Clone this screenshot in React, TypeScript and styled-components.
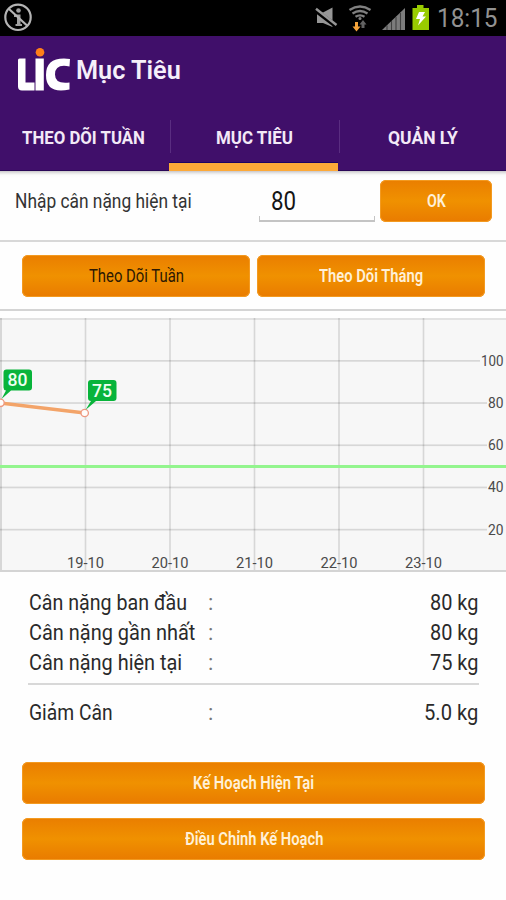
import React, { useLayoutEffect, useRef } from "react";
import styled, { createGlobalStyle } from "styled-components";

const GlobalStyle = createGlobalStyle`
  * { box-sizing: border-box; }
  body { margin: 0; background: #fefefe; font-family: Roboto, "Liberation Sans", sans-serif; }
  button { font-family: inherit; border: 0; padding: 0; cursor: pointer; }
`;

const FitBox = styled.span<{ $w: number }>`
  display: inline-block;
  width: ${(p) => p.$w}px;
  white-space: nowrap;
  text-align: left;
`;
const FitInner = styled.span`
  display: inline-block;
  transform-origin: 0 50%;
`;
function Fit({ w, children }: { w: number; children: React.ReactNode }) {
  const ref = useRef<HTMLSpanElement>(null);
  useLayoutEffect(() => {
    const el = ref.current;
    if (el) el.style.transform = `scaleX(${w / el.offsetWidth})`;
  }, [w]);
  return (
    <FitBox $w={w}>
      <FitInner ref={ref}>{children}</FitInner>
    </FitBox>
  );
}

const Screen = styled.div`
  width: 506px;
  height: 900px;
  overflow: hidden;
  display: flex;
  flex-direction: column;
`;

const StatusBar = styled.div`
  height: 36px;
  flex: none;
  background: #000;
  display: flex;
  justify-content: space-between;
`;
const StatusIcon = styled.svg`
  display: block;
  flex: none;
`;
const StatusRight = styled.div`
  display: flex;
  padding-right: 8px;
`;
const Clock = styled.div`
  color: #929292;
  font-size: 25.5px;
  line-height: 36px;
`;

const Header = styled.header`
  height: 135px;
  flex: none;
  background: #400f6a;
  border-bottom: 1px solid #2a0757;
`;
const TitleRow = styled.div`
  height: 68px;
  display: flex;
  align-items: center;
`;
const Title = styled.h1`
  margin: 1px 0 0 1px;
  font-size: 25px;
  line-height: 30px;
  font-weight: 600;
  color: #f6effa;
`;
const Tabs = styled.nav`
  height: 67px;
  display: grid;
  grid-template-columns: 169px 169px 168px;
`;
const Tab = styled.div<{ $active?: boolean; $shift: number }>`
  display: flex;
  align-items: center;
  justify-content: center;
  color: #f3e9f7;
  font-size: 18px;
  font-weight: 700;
  padding-top: ${(p) => (p.$active ? 8 : 0)}px;
  border-bottom: ${(p) => (p.$active ? "8px solid #fda938" : "0")};
  box-shadow: ${(p) => (p.$active ? "inset 0 -1px 0 #1d0463" : "none")};

  & > span {
    margin-left: ${(p) => p.$shift}px;
  }
  & + & {
    background: linear-gradient(#5a2d81, #5a2d81) 1px 16px / 1px 33px no-repeat;
  }
`;

const EntryRow = styled.section`
  height: 71px;
  flex: none;
  display: flex;
  align-items: flex-start;
  padding: 9px 14px 0 15px;
  border-bottom: 2px solid #d8d8d8;
  background: linear-gradient(#c9c6c9 0, #e6e6e6 2px, #fafafa 4px, #fefefe 7px);
`;
const EntryLabel = styled.label`
  width: 244px;
  font-size: 20px;
  line-height: 43px;
  color: #333;
`;
const Field = styled.div`
  width: 116px;
  height: 42px;
  margin-right: 5px;
  padding-left: 12px;
  font-size: 25px;
  line-height: 43px;
  color: #151515;
  background:
    linear-gradient(#c4c4c4, #c4c4c4) 0 100% / 100% 2px no-repeat,
    linear-gradient(#c4c4c4, #c4c4c4) 0 100% / 1px 6px no-repeat,
    linear-gradient(#c4c4c4, #c4c4c4) 100% 100% / 1px 6px no-repeat;
`;
const ActionButton = styled.button<{ $w: number; $dark?: boolean }>`
  width: ${(p) => p.$w}px;
  height: 42px;
  flex: none;
  border-radius: 6px;
  background: linear-gradient(#ea7e00, #f09100 50%, #e97b00);
  box-shadow: inset 0 0 0 1px #f39a20;
  color: ${(p) => (p.$dark ? "#2c1803" : "#fff0d8")};
  font-size: 18px;
  font-weight: ${(p) => (p.$dark ? 400 : 600)};
  line-height: 42px;
`;

const RangeRow = styled.section`
  height: 69px;
  flex: none;
  display: flex;
  gap: 7px;
  padding: 13px 0 0 22px;
  border-bottom: 2px solid #d4d4d4;
`;
const Chart = styled.svg`
  display: block;
  flex: none;
  margin-top: 7px;
`;

const Details = styled.section`
  padding: 15px 28px 0 29px;
  height: 190px;
  flex: none;
`;
const DetailRow = styled.div`
  height: 30.2px;
  display: grid;
  grid-template-columns: 179px 1fr auto;
  font-size: 22px;
  line-height: 31px;
  color: #2a2a2a;
`;
const Colon = styled.span`
  color: #777;
`;
const Rule = styled.div`
  height: 2px;
  margin: 5px -1px 12px;
  background: #d8d8d8;
`;
const Actions = styled.footer`
  display: flex;
  flex-direction: column;
  gap: 14px;
  padding-left: 22px;
`;

const readings = [
  { label: "Cân nặng ban đầu", w: 158, value: "80 kg", vw: 48 },
  { label: "Cân nặng gần nhất", w: 166, value: "80 kg", vw: 48 },
  { label: "Cân nặng hiện tại", w: 153, value: "75 kg", vw: 48 },
];

function Reading({ label, w, value, vw }: (typeof readings)[number]) {
  return (
    <DetailRow>
      <Fit w={w}>{label}</Fit>
      <Colon>:</Colon>
      <Fit w={vw}>{value}</Fit>
    </DetailRow>
  );
}

function WeightChart() {
  const days = ["19-10", "20-10", "21-10", "22-10", "23-10"];
  const levels = [100, 80, 60, 40, 20];
  return (
    <Chart width="506" height="254" viewBox="0 0 506 254" fontFamily="Roboto, sans-serif">
      <rect width="506" height="254" fill="#f7f7f7" />
      <rect width="506" height="2" fill="#e2e2e2" />
      <rect y="252" width="506" height="2" fill="#d4d4d4" />
      <g fill="#000" fillOpacity="0.13">
        <rect x="0" width="2" height="252" />
        {days.map((d, i) => (
          <rect key={d} x={84.7 + i * 84.5} width="1.6" height="252" />
        ))}
        {levels.map((v, i) => (
          <rect key={v} y={42 + i * 42.2} width={v === 100 ? 480 : 487} height="1.7" />
        ))}
      </g>
      <rect y="147" width="506" height="3" fill="#93f58e" />
      <g fontSize="14.2" fill="#4a4a4a">
        {levels.map((v, i) => (
          <text key={v} x="503.5" y={47.8 + i * 42.2} textAnchor="end" textLength={v === 100 ? 22.5 : 15.5} lengthAdjust="spacingAndGlyphs">
            {v}
          </text>
        ))}
        {days.map((d, i) => (
          <text key={d} x={85.5 + i * 84.5} y="250" textAnchor="middle" textLength="37" lengthAdjust="spacingAndGlyphs">
            {d}
          </text>
        ))}
      </g>
      <path d="M0 85 L85 95" stroke="#f3a469" strokeWidth="3.4" fill="none" />
      <g fill="#fffdfb" stroke="#ee9880" strokeWidth="1.3">
        <circle cx="0.5" cy="84.8" r="3.7" />
        <circle cx="84.7" cy="95" r="3.7" />
      </g>
      <g fill="#08b43b">
        <path d="M1.5 81 L6 72.5 Q3.5 72 3.5 69.5 V54.5 q0-3 3-3 H29 q3 0 3 3 V69.5 q0 3-3 3 H11z" />
        <path d="M85.5 92 L91 83 Q88 83 88 80 V65 q0-3 3-3 H113.5 q3 0 3 3 V80 q0 3-3 3 H96z" />
      </g>
      <g fontSize="17.5" fontWeight="500" fill="#effff2">
        <text x="7.5" y="68" textLength="20" lengthAdjust="spacingAndGlyphs">80</text>
        <text x="92" y="78.500" textLength="20" lengthAdjust="spacingAndGlyphs">75</text>
      </g>
    </Chart>
  );
}

export default function App() {
  return (
    <Screen>
      <GlobalStyle />
      <StatusBar>
        <StatusIcon width="36" height="36" viewBox="0 0 36 36">
          <circle cx="18" cy="17.3" r="12.7" fill="none" stroke="#b4b4b4" strokeWidth="2.2" />
          <circle cx="18.5" cy="10.5" r="2.3" fill="#a0a0a0" />
          <path d="M14 14.5 H20.5 V24 H22 V26 H15.5 V24 H17 V17 H14z" fill="#a0a0a0" />
          <path d="M9 9 L27 25.5" stroke="#b4b4b4" strokeWidth="2.2" />
        </StatusIcon>
        <StatusRight>
          <StatusIcon width="125" height="36" viewBox="312 0 125 36">
            <path d="M317 12.5 H323 L332.5 7.5 V27 L323 23 H317z" fill="#969696" />
            <path d="M314.5 9.5 L336 26" stroke="#000" strokeWidth="4.6" />
            <path d="M316 8.8 L336.5 25" stroke="#969696" strokeWidth="2.4" />
            <g fill="none" stroke="#808080" strokeWidth="2.3">
              <path d="M349.5 10 Q360 3 370.5 10" />
              <path d="M352.5 13.5 Q360 8.5 367.5 13.5" />
              <path d="M355.5 16.8 Q360 14 364.5 16.8" />
            </g>
            <circle cx="360" cy="18.5" r="1.5" fill="#808080" />
            <path d="M355 22 H358 V26.5 H360.5 L356.5 31.5 L352.5 26.5 H355z" fill="#f5a33a" />
            <path d="M361.5 28 V24.5 H359.5 L363 20 L366.5 24.5 H364.5 V28z" fill="#626262" />
            <path d="M382 30 L405 8 V30z" fill="#7c7c7c" />
            <path d="M387 25.5V30 M391.5 21V30 M396 17V30 M400.5 13V30" stroke="#404040" strokeWidth="1.1" />
            <path d="M412.5 8 H417 V5 H423.5 V8 H429 V30 H412.5z" fill="#99cc00" />
            <path d="M419 12 H425 L422.5 16.5 H426 L418 25.5 L420 19 H416z" fill="#fff" />
          </StatusIcon>
          <Clock><Fit w={61}>18:15</Fit></Clock>
        </StatusRight>
      </StatusBar>

      <Header>
        <TitleRow>
          <StatusIcon width="75" height="68" viewBox="0 36 75 68" role="img" aria-label="LiC">
            <path d="M18 60 Q18 58.5 19.5 58.5 H25.5 V82.5 H34.5 V90.5 H22 Q18 90.5 18 86.5z" fill="#fff" />
            <rect x="35.5" y="58.5" width="8.3" height="32" fill="#fff" />
            <path d="M70 59 L69.5 66.5 Q55 63.5 55 74.5 Q55 84.5 69.5 82.5 V89.5 Q46 94.5 46 75 Q46 56 70 59z" fill="#fff" />
            <circle cx="40" cy="52.3" r="4.3" fill="#ff7f18" />
          </StatusIcon>
          <Title><Fit w={105}>Mục Tiêu</Fit></Title>
        </TitleRow>
        <Tabs>
          <Tab $shift={-3}><Fit w={123}>THEO DÕI TUẦN</Fit></Tab>
          <Tab $active $shift={1}><Fit w={77}>MỤC TIÊU</Fit></Tab>
          <Tab $shift={2}><Fit w={70}>QUẢN LÝ</Fit></Tab>
        </Tabs>
      </Header>

      <EntryRow>
        <EntryLabel><Fit w={177}>Nhập cân nặng hiện tại</Fit></EntryLabel>
        <Field><Fit w={25}>80</Fit></Field>
        <ActionButton $w={112}><Fit w={19}>OK</Fit></ActionButton>
      </EntryRow>

      <RangeRow>
        <ActionButton $w={228} $dark><Fit w={95}>Theo Dõi Tuần</Fit></ActionButton>
        <ActionButton $w={228}><Fit w={104}>Theo Dõi Tháng</Fit></ActionButton>
      </RangeRow>

      <WeightChart />

      <Details>
        {readings.map((r) => (
          <Reading key={r.label} {...r} />
        ))}
        <Rule />
        <Reading label="Giảm Cân" w={84} value="5.0 kg" vw={54} />
      </Details>

      <Actions>
        <ActionButton $w={463}><Fit w={121}>Kế Hoạch Hiện Tại</Fit></ActionButton>
        <ActionButton $w={463}><Fit w={138}>Điều Chỉnh Kế Hoạch</Fit></ActionButton>
      </Actions>
    </Screen>
  );
}
